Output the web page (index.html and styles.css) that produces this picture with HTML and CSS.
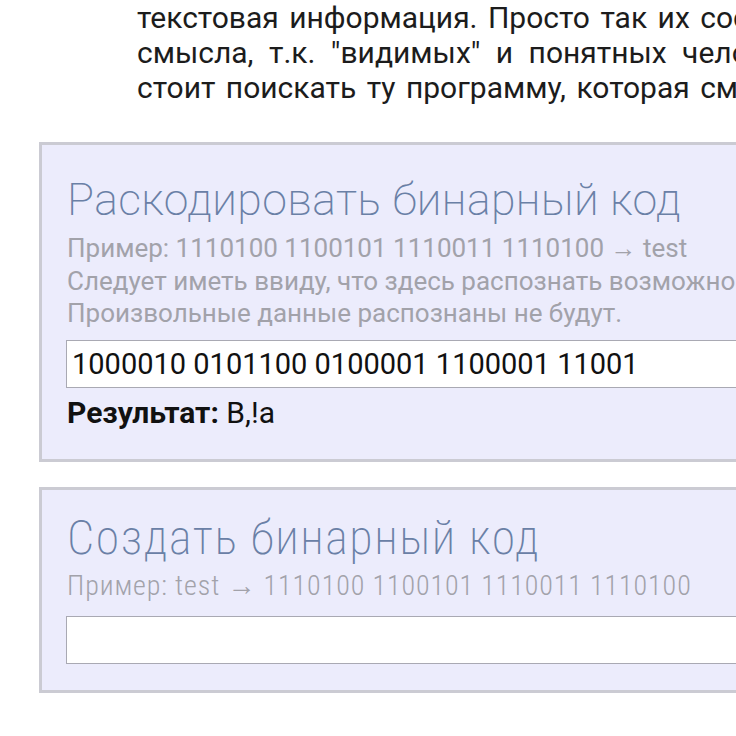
FILE: index.html
```html
<!DOCTYPE html>
<html lang="ru">
<head>
    <meta charset="UTF-8">
    <meta name="viewport" content="width=device-width, initial-scale=1.0">
    <title>Бинарный код</title>
    <link rel="stylesheet" href="styles.css">
</head>
<body>
    <div class="page">
        <p class="intro">
            <span class="line l1">текстовая информация. Просто так их составить не получится, т.к.</span>
            <span class="line l2">смысла, т.к. "видимых" и понятных человеку символов там нет, и</span>
            <span class="line l3">стоит поискать ту программу, которая смогла бы их прочитать.</span>
        </p>

        <!-- Decode -->
        <section class="tool">
            <h2>Раскодировать бинарный код</h2>
            <p class="hint">Пример: 1110100 1100101 1110011 1110100 &rarr; test<br>
            Следует иметь ввиду, что здесь распознать возможно только текстовую информацию.<br>
            Произвольные данные распознаны не будут.</p>
            <input type="text" class="field" value="1000010 0101100 0100001 1100001 11001">
            <div class="result"><b>Результат:</b> B,!a</div>
        </section>

        <!-- Encode -->
        <section class="tool tool-encode">
            <h2>Создать бинарный код</h2>
            <p class="hint">Пример: test &rarr; 1110100 1100101 1110011 1110100</p>
            <input type="text" class="field" value="">
        </section>
    </div>
</body>
</html>
```

FILE: styles.css
```css
/* General */
body {
    margin: 0;
    padding: 0;
    background-color: #fff;
    color: #222;
    font-family: Roboto, "Noto Sans", sans-serif;
    overflow: hidden;
}

.page {
    width: 1200px;
}

/* Intro text */
.intro {
    margin: 0 0 0 137px;
    width: 1000px;
    font-size: 30px;
    line-height: 35px;
    color: #1c1c1c;
}

.intro .line {
    display: block;
    white-space: nowrap;
}

.intro .l1 {
    word-spacing: 3px;
}

.intro .l2 {
    word-spacing: 8px;
}

.intro .l3 {
    word-spacing: 3px;
}

/* Tool boxes */
.tool {
    margin: 37px 0 0 39px;
    padding: 28px 0 27px 25px;
    background-color: #ececfc;
    border: 3px solid #cbcbd3;
}

.tool h2 {
    margin: 0 0 5px;
    font-size: 44.5px;
    font-weight: 200;
    line-height: 54px;
    letter-spacing: 0.4px;
    color: #6a80a6;
}

.hint {
    margin: 0 0 10px;
    font-size: 26px;
    line-height: 32.5px;
    color: #a2a2aa;
}

.field {
    display: block;
    box-sizing: border-box;
    width: 900px;
    height: 48px;
    margin: 0 0 0 -1px;
    padding: 0 5px;
    border: 1px solid #a9a9b3;
    background: #fff;
    font-family: Roboto, sans-serif;
    font-size: 29px;
    color: #111;
    outline: none;
}

.result {
    margin-top: 6px;
    font-size: 30px;
    line-height: 38px;
    color: #111;
}

.result b {
    font-weight: 700;
}

/* Encode box uses the narrow face */
.tool-encode {
    margin-top: 25px;
    padding-top: 21px;
    padding-bottom: 26px;
}

.tool-encode h2 {
    font-size: 48px;
    font-stretch: condensed;
    letter-spacing: 1.6px;
}

.tool-encode .hint {
    margin-bottom: 14px;
    font-size: 28px;
    font-weight: 300;
    font-stretch: condensed;
    letter-spacing: 0.9px;
}
```
